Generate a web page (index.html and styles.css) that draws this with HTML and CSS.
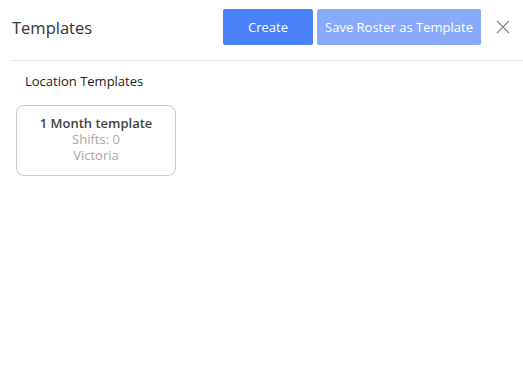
FILE: index.html
```html
<!DOCTYPE html>
<html lang="en">

<head>
    <meta charset="UTF-8">
    <meta name="viewport" content="width=device-width, initial-scale=1.0">
    <title>Templates</title>
    <link rel="stylesheet" href="styles.css">
</head>

<body>
    <div class="modal">
        <div class="modal-header">
            <h2 class="modal-title">Templates</h2>
            <div class="header-actions">
                <button class="primary-button">Create</button>
                <button class="primary-button disabled">Save Roster as Template</button>
                <button class="close-button" aria-label="Close">
                    <svg width="14" height="14" viewBox="0 0 14 14">
                        <path d="M1 1 L13 13 M13 1 L1 13" stroke="#8a8a8a" stroke-width="1.3" fill="none" />
                    </svg>
                </button>
            </div>
        </div>

        <div class="modal-body">
            <h3 class="section-title">Location Templates</h3>
            <div class="template-list">
                <div class="template-card">
                    <div class="template-name">1 Month template</div>
                    <div class="template-meta">Shifts: 0</div>
                    <div class="template-meta">Victoria</div>
                </div>
            </div>
        </div>
    </div>
</body>

</html>
```

FILE: styles.css
```css
body {
    margin: 0;
    padding: 0;
    font-family: "Open Sans", Arial, sans-serif;
    background-color: white;
    color: #333333;
}

.modal {
    width: 523px;
}

.modal-header {
    display: flex;
    align-items: center;
    justify-content: space-between;
    margin-left: 11px;
    padding: 9px 12px 15px 1px;
    border-bottom: 1px solid #e3e3e3;
}

.modal-title {
    margin: 0;
    font-size: 16.5px;
    font-weight: 400;
    color: #333333;
}

.header-actions {
    display: flex;
    align-items: center;
    gap: 4px;
}

.primary-button {
    background-color: #4a80fa;
    /* Blue background for primary button */
    color: #ffffff;
    font-family: inherit;
    font-size: 13px;
    height: 36px;
    padding: 0 10px;
    border: none;
    border-radius: 2px;
    cursor: pointer;
}

.primary-button:first-child {
    width: 90px;
}

.primary-button.disabled {
    background-color: #87aafa;
    /* Lighter blue for disabled button */
    width: 164px;
    padding: 0;
}

.close-button {
    background: none;
    border: none;
    padding: 0;
    margin-left: 10px;
    width: 16px;
    height: 16px;
    display: flex;
    align-items: center;
    justify-content: center;
    cursor: pointer;
}

.modal-body {
    padding: 11px 16px;
}

.section-title {
    margin: 0 0 15px 9px;
    font-size: 13px;
    font-weight: 500;
    color: #222222;
}

.template-list {
    display: flex;
    gap: 12px;
}

.template-card {
    width: 158px;
    height: 69px;
    border: 1px solid #c8c8c8;
    border-radius: 8px;
    display: flex;
    flex-direction: column;
    align-items: center;
    justify-content: center;
}

.template-name {
    font-size: 13px;
    font-weight: 600;
    color: #444444;
    line-height: 16px;
    margin-top: -4px;
}

.template-meta {
    font-size: 13px;
    color: #a8a8a8;
    line-height: 16px;
}
```
